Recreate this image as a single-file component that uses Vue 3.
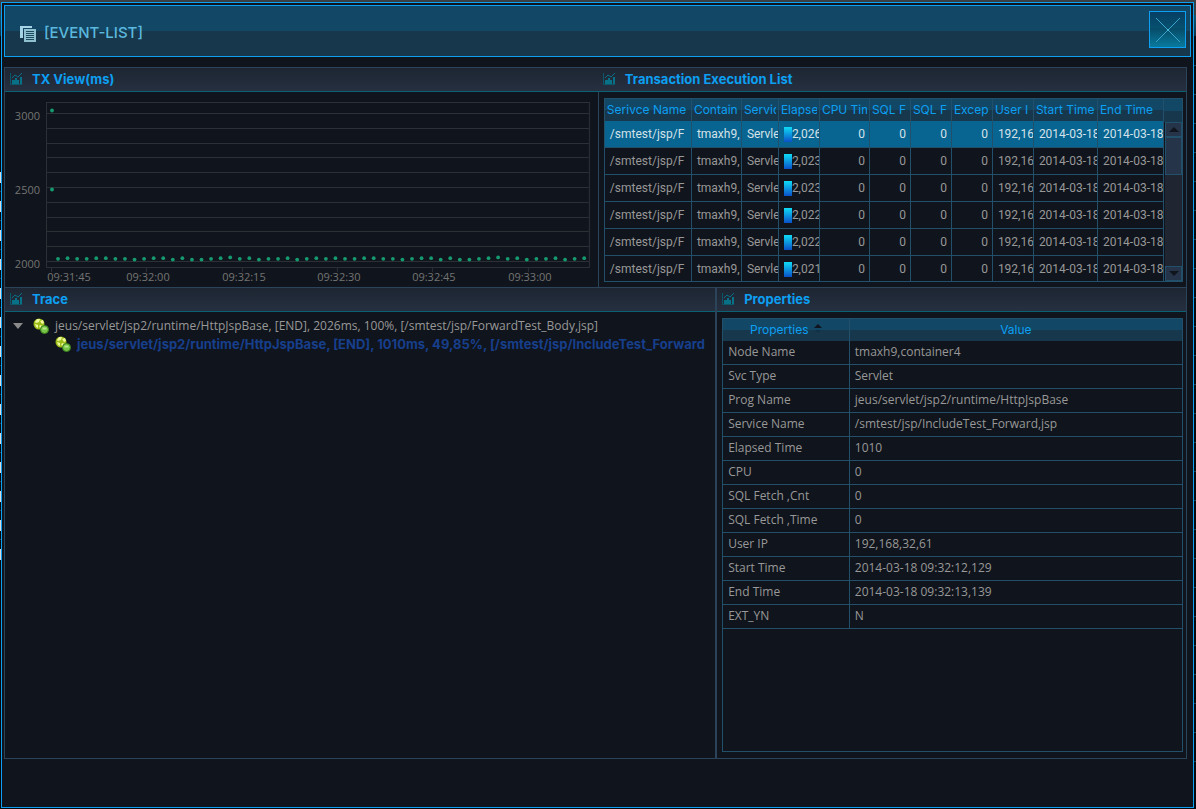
<script setup>
const chart = {
  grid: Array.from({ length: 11 }, (_, i) => Math.round(21 + i * 14.8)),
  yLabels: [{ y: 28, text: '3000' }, { y: 102, text: '2500' }, { y: 176, text: '2000' }],
  ticks: [46, 141, 237, 332, 427, 523],
  xLabels: [
    { x: 64, text: '09:31:45' },
    { x: 143, text: '09:32:00' },
    { x: 239, text: '09:32:15' },
    { x: 334, text: '09:32:30' },
    { x: 429, text: '09:32:45' },
    { x: 525, text: '09:33:00' },
  ],
}

const jitter = [2, 1, 2, 2, 1, 1, 2, 2, 3, 2, 1, 1, 3, 1, 3, 3, 2, 1, 0, 2, 1, 3, 2, 2, 1, 3, 2, 1]
const dots = Array.from({ length: 56 }, (_, i) => ({
  x: 53 + i * 9.57,
  y: 165.5 + jitter[i % jitter.length] * 0.7,
}))
dots.push({ x: 47, y: 18.5 }, { x: 47, y: 97.5 })

const columns = [
  { name: 'Serivce Name', width: 87 },
  { name: 'Contain', width: 50 },
  { name: 'Servic', width: 37 },
  { name: 'Elapse', width: 41 },
  { name: 'CPU Tim', width: 50 },
  { name: 'SQL F', width: 41 },
  { name: 'SQL F', width: 41 },
  { name: 'Excep', width: 41 },
  { name: 'User I', width: 41 },
  { name: 'Start Time', width: 64 },
  { name: 'End Time', width: 66 },
]
const totalWidth = columns.reduce((sum, c) => sum + c.width, 0)

const elapsed = ['2,026', '2,023', '2,023', '2,022', '2,022', '2,021']

const properties = [
  ['Node Name', 'tmaxh9,container4'],
  ['Svc Type', 'Servlet'],
  ['Prog Name', 'jeus/servlet/jsp2/runtime/HttpJspBase'],
  ['Service Name', '/smtest/jsp/IncludeTest_Forward,jsp'],
  ['Elapsed Time', '1010'],
  ['CPU', '0'],
  ['SQL Fetch ,Cnt', '0'],
  ['SQL Fetch ,Time', '0'],
  ['User IP', '192,168,32,61'],
  ['Start Time', '2014-03-18 09:32:12,129'],
  ['End Time', '2014-03-18 09:32:13,139'],
  ['EXT_YN', 'N'],
]

const trace = [
  { level: 0, text: 'jeus/servlet/jsp2/runtime/HttpJspBase, [END], 2026ms, 100%, [/smtest/jsp/ForwardTest_Body,jsp]' },
  { level: 1, text: 'jeus/servlet/jsp2/runtime/HttpJspBase, [END], 1010ms, 49,85%, [/smtest/jsp/IncludeTest_Forward' },
]
</script>

<template>
  <div class="desktop">
    <div class="dialog">
      <header class="title-bar">
        <svg class="title-icon" width="18" height="18" viewBox="0 0 18 18">
          <path d="M1 1h12v2H4v10H1z" fill="#a3d3e4" />
          <rect x="5" y="4" width="12" height="13" fill="#8fc0cf" />
          <path d="M7 6.5h8M7 8.5h8M7 10.5h8M7 12.5h8M7 14.5h8" stroke="#1d4a5c" />
        </svg>
        <h1>[EVENT-LIST]</h1>
        <button class="close" type="button" aria-label="Close">
          <svg width="24" height="24" viewBox="0 0 24 24">
            <path d="M0 0L24 24M24 0L0 24" stroke="#3ba5cc" />
            <circle cx="12" cy="12" r="1" fill="#4cc0e4" />
          </svg>
        </button>
      </header>

      <main class="frame">
        <div class="row row-top">
          <section class="panel panel-chart">
            <h2>
              <svg class="panel-icon" width="12" height="12" viewBox="0 0 12 12">
                <path d="M.5 0v11.5H12" fill="none" stroke="#0b5669" />
                <path d="M2 7h3v4H2zM5 5h2v6H5zM7 7h2v4H7zM10 4h2v7h-2z" fill="#087087" />
                <path d="M2 5L5 2l3 2 4-4" fill="none" stroke="#087087" />
              </svg>
              TX View(ms)
            </h2>
            <svg class="chart" viewBox="0 0 593 195">
              <rect x="41.5" y="10.5" width="543" height="165" class="line" />
              <line v-for="y in chart.grid" :key="y" x1="42" x2="584" :y1="y + 0.5" :y2="y + 0.5" class="line" />
              <line v-for="x in chart.ticks" :key="x" :x1="x + 0.5" :x2="x + 0.5" y1="176" y2="180" class="line" />
              <text v-for="l in chart.yLabels" :key="l.text" x="35" :y="l.y" class="y-label">{{ l.text }}</text>
              <text v-for="l in chart.xLabels" :key="l.text" :x="l.x" y="189" class="x-label">{{ l.text }}</text>
              <circle v-for="(d, i) in dots" :key="i" :cx="d.x" :cy="d.y" r="1.9" fill="#169a70" />
            </svg>
          </section>

          <section class="panel panel-list">
            <h2>
              <svg class="panel-icon" width="12" height="12" viewBox="0 0 12 12">
                <path d="M.5 0v11.5H12" fill="none" stroke="#0b5669" />
                <path d="M2 7h3v4H2zM5 5h2v6H5zM7 7h2v4H7zM10 4h2v7h-2z" fill="#087087" />
                <path d="M2 5L5 2l3 2 4-4" fill="none" stroke="#087087" />
              </svg>
              Transaction Execution List
            </h2>
            <div class="list-body">
              <div class="grid-box list-box">
                <table class="list">
                  <colgroup>
                    <col v-for="(c, i) in columns" :key="i" :style="{ width: (c.width / totalWidth) * 100 + '%' }">
                  </colgroup>
                  <thead>
                    <tr>
                      <th v-for="(c, i) in columns" :key="i"><div>{{ c.name }}</div></th>
                    </tr>
                  </thead>
                  <tbody>
                    <tr v-for="(e, i) in elapsed" :key="i" :class="{ selected: i === 0 }">
                      <td>/smtest/jsp/F</td>
                      <td>tmaxh9,</td>
                      <td>Servle</td>
                      <td><div class="elapsed"><i class="bar" />{{ e }}</div></td>
                      <td class="num">0</td>
                      <td class="num">0</td>
                      <td class="num">0</td>
                      <td class="num">0</td>
                      <td>192,16</td>
                      <td>2014-03-18</td>
                      <td>2014-03-18</td>
                    </tr>
                  </tbody>
                </table>
                <div class="scroll">
                  <div class="scroll-head" />
                  <button class="scroll-btn" type="button" aria-label="Scroll up">
                    <svg width="10" height="5" viewBox="0 0 10 5"><path d="M0 5L5 0l5 5z" fill="#10151d" /></svg>
                  </button>
                  <div class="thumb" />
                  <div class="track" />
                  <button class="scroll-btn" type="button" aria-label="Scroll down">
                    <svg width="10" height="5" viewBox="0 0 10 5"><path d="M0 0l5 5 5-5z" fill="#10151d" /></svg>
                  </button>
                </div>
              </div>
            </div>
          </section>
        </div>

        <div class="row row-bottom">
          <section class="panel panel-trace">
            <h2>
              <svg class="panel-icon" width="12" height="12" viewBox="0 0 12 12">
                <path d="M.5 0v11.5H12" fill="none" stroke="#0b5669" />
                <path d="M2 7h3v4H2zM5 5h2v6H5zM7 7h2v4H7zM10 4h2v7h-2z" fill="#087087" />
                <path d="M2 5L5 2l3 2 4-4" fill="none" stroke="#087087" />
              </svg>
              Trace
            </h2>
            <ul class="tree">
              <li v-for="node in trace" :key="node.level" :class="`level-${node.level}`">
                <svg v-if="node.level === 0" class="arrow" width="10" height="6" viewBox="0 0 10 6">
                  <path d="M0 0h10L5 6z" fill="#8a8a8a" />
                </svg>
                <svg class="node-icon" width="16" height="16" viewBox="0 0 16 16">
                  <circle cx="6" cy="6" r="5.5" fill="#9cbd18" />
                  <path d="M4 1h3l-1 3-3 1-1-1zM7 3l3-1 1 3-2 1zM2 6l3 1v3L3 9zM7 7l3 1-2 2-2-1z" fill="#eef79a" />
                  <circle cx="11.5" cy="11.5" r="4" fill="#78c447" stroke="#37801f" />
                  <path d="M9.5 10.5h4" stroke="#b5e88a" stroke-width="2" />
                </svg>
                <span>{{ node.text }}</span>
              </li>
            </ul>
          </section>

          <section class="panel panel-props">
            <h2>
              <svg class="panel-icon" width="12" height="12" viewBox="0 0 12 12">
                <path d="M.5 0v11.5H12" fill="none" stroke="#0b5669" />
                <path d="M2 7h3v4H2zM5 5h2v6H5zM7 7h2v4H7zM10 4h2v7h-2z" fill="#087087" />
                <path d="M2 5L5 2l3 2 4-4" fill="none" stroke="#087087" />
              </svg>
              Properties
            </h2>
            <div class="grid-box props-box">
              <table class="props">
                <thead>
                  <tr>
                    <th class="key-col">
                      Properties
                      <svg width="8" height="10" viewBox="0 0 8 10">
                        <path d="M0 4l4-4 4 4z" fill="#10151d" />
                        <path d="M1 6h6L4 9z" fill="#123044" />
                      </svg>
                    </th>
                    <th>Value</th>
                  </tr>
                </thead>
                <tbody>
                  <tr v-for="[key, value] in properties" :key="key">
                    <td>{{ key }}</td>
                    <td>{{ value }}</td>
                  </tr>
                </tbody>
              </table>
            </div>
          </section>
        </div>
      </main>
    </div>
  </div>
</template>

<style>
body {
  margin: 0;
  background: #06080c;
}
</style>

<style scoped>
.desktop {
  box-sizing: border-box;
  min-height: 100vh;
  padding: 2px 2px 1px 1px;
  display: flex;
  background:
    linear-gradient(#3a3f44, #3a3f44) 0 0 / 100% 15px no-repeat,
    linear-gradient(#0d5470, #123044) 0 15px / 100% 21px no-repeat,
    repeating-linear-gradient(#d8dadc 0 11px, #06080c 11px 19px, #1c4257 19px 20px, #06080c 20px 29px) 0 172px / 1px 390px no-repeat,
    repeating-linear-gradient(#1c4257 0 1px, #06080c 1px 29px) 100% 65px / 2px 700px no-repeat,
    #06080c;
  font-family: "Open Sans", "Noto Sans", sans-serif;
  font-size: 12px;
  line-height: 16px;
  color: #989898;
}

.dialog {
  box-sizing: border-box;
  flex: 1;
  min-width: 0;
  display: flex;
  flex-direction: column;
  padding: 2px 2px 48px;
  border: 1px solid #0c9ff2;
  background: #10141c;
}

.title-bar {
  box-sizing: border-box;
  height: 52px;
  display: flex;
  align-items: center;
  padding: 0 4px 3px 14px;
  border: 1px solid #0c9ff2;
  background: linear-gradient(#124866 0 50%, #17384c 50%);
}

.title-icon {
  margin-top: 8px;
}

h1 {
  flex: 1;
  margin: 7px 0 0 7px;
  color: #5bb8df;
  font-family: Inter, sans-serif;
  font-size: 15px;
  font-weight: 500;
  line-height: 16px;
}

.close {
  width: 37px;
  height: 37px;
  padding: 0;
  display: grid;
  place-items: center;
  border: 1px solid #0c9ff2;
  background: linear-gradient(#063f64, #07506f 45%, #064a66 45%, #087a9e);
}

.frame {
  flex: 1;
  display: flex;
  flex-direction: column;
  margin: 10px 4px 0 0;
  border: 1px solid #2b4459;
}

.row {
  display: flex;
}

.row-top {
  border-bottom: 1px solid #2b4459;
}

.row-bottom {
  flex: 1;
}

.panel {
  box-sizing: border-box;
  min-width: 0;
  display: flex;
  flex-direction: column;
}

.panel-chart {
  width: 50.2%;
}

.panel-list {
  flex: 1;
}

.list-body {
  flex: 1;
  border-left: 1px solid #2b4459;
}

.panel-trace {
  width: 60.3%;
  border-right: 2px solid #2b4459;
}

.panel-props {
  flex: 1;
}

h2 {
  box-sizing: border-box;
  height: 24px;
  margin: 0;
  padding: 0 0 1px 5px;
  display: flex;
  align-items: center;
  gap: 10px;
  border-bottom: 1px solid #0b6173;
  background: linear-gradient(#1d2532, #263040);
  color: #0c9ff2;
  font-family: Inter, sans-serif;
  font-size: 13px;
  font-weight: 700;
}

.chart {
  display: block;
  width: 100%;
}

.line {
  fill: none;
  stroke: #2e3138;
}

.y-label,
.x-label {
  fill: #747474;
  font-size: 11px;
}

.y-label {
  text-anchor: end;
}

.x-label {
  text-anchor: middle;
}

.grid-box {
  border: 1px solid #22506b;
}

.list-box {
  display: flex;
  height: 182px;
  margin: 6px 3px 5px 5px;
  overflow: hidden;
}

table {
  table-layout: fixed;
  border-collapse: separate;
  border-spacing: 0;
  width: 100%;
}

th {
  box-sizing: border-box;
  height: 22px;
  padding: 0;
  border-right: 1px solid #22506b;
  background: linear-gradient(#124866 0 50%, #17384c 50%);
  color: #0c9ff2;
  font-family: Inter, sans-serif;
  font-weight: 400;
}

td {
  box-sizing: border-box;
  border-right: 1px solid #22506b;
  border-bottom: 1px solid #22506b;
  white-space: nowrap;
  overflow: hidden;
}

.list {
  flex: 1;
  align-self: flex-start;
}

.list th div {
  margin: 0 2px;
  overflow: hidden;
  text-align: left;
  white-space: nowrap;
}

.list td {
  height: 27px;
  padding: 0 0 0 5px;
  font-family: Roboto, sans-serif;
}

.list .num {
  padding-right: 4px;
  text-align: right;
}

.elapsed {
  display: flex;
  align-items: center;
}

.bar {
  flex: none;
  width: 8px;
  height: 15px;
  background: linear-gradient(#0fdcf5, #0a50c8);
}

.selected td {
  background: #086490;
  color: #d4e2ea;
}

.scroll {
  width: 18px;
  flex: none;
  display: flex;
  flex-direction: column;
}

.scroll-head {
  height: 23px;
  background: linear-gradient(#124866 0 50%, #17384c 50%);
}

.scroll-btn {
  box-sizing: border-box;
  height: 15px;
  margin-left: 1px;
  padding: 0;
  display: grid;
  place-items: center;
  border: 1px solid #22506b;
  background: #26344a;
}

.thumb {
  box-sizing: border-box;
  height: 38px;
  margin-left: 1px;
  border: 1px solid #22506b;
  background: #26344a;
}

.track {
  flex: 1;
  margin-left: 1px;
  background: #1f2531;
}

.tree {
  margin: 0;
  padding: 5px 3px 0 0;
  list-style: none;
}

.tree li {
  height: 18px;
  display: flex;
  align-items: center;
  overflow: hidden;
  white-space: nowrap;
}

.tree span {
  margin-left: 6px;
}

.arrow {
  margin: 0 10px 0 8px;
}

.node-icon {
  flex: none;
}

.tree .level-1 {
  padding-left: 50px;
  color: #173f8c;
  font-family: Inter, sans-serif;
  font-size: 13px;
  font-weight: 700;
}

.props-box {
  flex: 1;
  margin: 6px 3px 6px 5px;
}

.props td {
  height: 24px;
  padding: 0 5px 2px;
}

.props th {
  height: 22px;
}

.props th:last-child,
.props td:last-child {
  border-right: 0;
}

.key-col {
  width: 27.6%;
}

.key-col svg {
  margin-left: 2px;
}
</style>
